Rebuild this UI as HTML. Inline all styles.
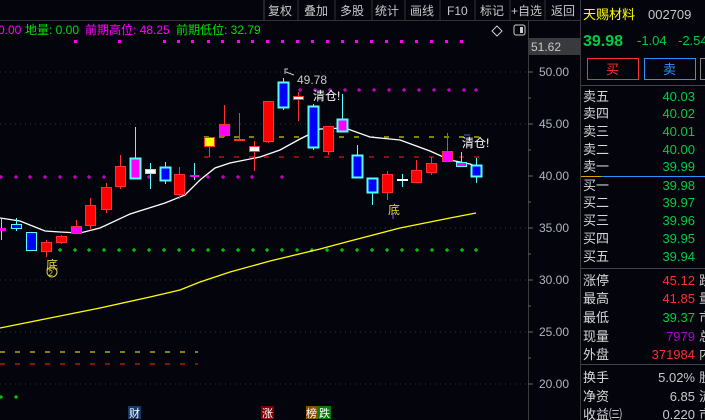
<!DOCTYPE html>
<html><head><meta charset="utf-8"><style>
html,body{margin:0;padding:0;background:#04040c;width:705px;height:420px;overflow:hidden}
svg{display:block}
text{font-family:"Liberation Sans","Noto Sans CJK SC",sans-serif}
</style></head><body>
<svg width="705" height="420" viewBox="0 0 705 420" xmlns="http://www.w3.org/2000/svg">
<rect width="705" height="420" fill="#04040c"/>
<!-- top toolbar -->
<g font-size="12" fill="#c8c8c8">
<line x1="264" y1="0" x2="264" y2="20" stroke="#444"/>
<text x="268" y="15">复权</text><line x1="298" y1="0" x2="298" y2="20" stroke="#333"/>
<text x="304" y="15">叠加</text><line x1="335" y1="0" x2="335" y2="20" stroke="#333"/>
<text x="340" y="15">多股</text><line x1="372" y1="0" x2="372" y2="20" stroke="#333"/>
<text x="375" y="15">统计</text><line x1="405" y1="0" x2="405" y2="20" stroke="#333"/>
<text x="410" y="15">画线</text><line x1="440" y1="0" x2="440" y2="20" stroke="#333"/>
<text x="447" y="15">F10</text><line x1="475" y1="0" x2="475" y2="20" stroke="#333"/>
<text x="480" y="15">标记</text><line x1="510" y1="0" x2="510" y2="20" stroke="#333"/>
<text x="511" y="15">+自选</text><line x1="545" y1="0" x2="545" y2="20" stroke="#333"/>
<text x="551" y="15">返回</text>
</g>
<line x1="0" y1="20.5" x2="580" y2="20.5" stroke="#333"/>
<!-- legend -->
<g font-size="12">
<text x="-2" y="34" fill="#ff00ff">0.00</text>
<text x="25" y="34" fill="#00e000">地量: 0.00</text>
<text x="85" y="34" fill="#ff00ff">前期高位: 48.25</text>
<text x="176" y="34" fill="#00e000">前期低位: 32.79</text>
</g>
<!-- small icons top right of chart -->
<path d="M497 26 l5 5 -5 5 -5 -5z" fill="none" stroke="#ccc"/>
<rect x="514" y="25" width="11" height="10" rx="2" fill="none" stroke="#ccc"/>
<rect x="520" y="27" width="3" height="6" fill="#ccc"/>
<!-- grid -->
<g stroke="#333" stroke-dasharray="1 4">
<line x1="0" y1="72" x2="528" y2="72"/><line x1="0" y1="124" x2="528" y2="124"/>
<line x1="0" y1="228" x2="528" y2="228"/><line x1="0" y1="280" x2="528" y2="280"/>
<line x1="0" y1="332" x2="528" y2="332"/><line x1="0" y1="384" x2="528" y2="384"/>
</g>
<!-- magenta dot row top -->
<g fill="#ff00ff">
<rect x="74" y="40" width="3" height="3"/><rect x="118" y="40" width="3" height="3"/>
<rect x="163" y="40" width="3" height="3"/><rect x="177" y="40" width="3" height="3"/>
<rect x="191" y="40" width="3" height="3"/><rect x="207" y="40" width="3" height="3"/>
<rect x="221" y="40" width="3" height="3"/><rect x="237" y="40" width="3" height="3"/>
<rect x="251" y="40" width="3" height="3"/><rect x="266" y="40" width="3" height="3"/>
<rect x="281" y="40" width="3" height="3"/><rect x="296" y="40" width="3" height="3"/>
<rect x="311" y="40" width="3" height="3"/><rect x="326" y="40" width="3" height="3"/>
<rect x="341" y="40" width="3" height="3"/><rect x="355" y="40" width="3" height="3"/>
<rect x="370" y="40" width="3" height="3"/><rect x="385" y="40" width="3" height="3"/>
<rect x="400" y="40" width="3" height="3"/><rect x="415" y="40" width="3" height="3"/>
<rect x="430" y="40" width="3" height="3"/><rect x="445" y="40" width="3" height="3"/>
<rect x="460" y="40" width="3" height="3"/>
</g>
<!-- plus rows -->
<g stroke="#ff00ff" stroke-width="1">
<path d="M298 90h4M300 88v4M313 90h4M315 88v4M328 90h4M330 88v4M343 90h4M345 88v4M357 90h4M359 88v4M372 90h4M374 88v4M387 90h4M389 88v4M402 90h4M404 88v4M417 90h4M419 88v4M432 90h4M434 88v4M447 90h4M449 88v4M462 90h4M464 88v4M474 90h4M476 88v4"/>
<path d="M-1 177h4M1 175v4M14 177h4M16 175v4M28 177h4M30 175v4M43 177h4M45 175v4M58 177h4M60 175v4M73 177h4M75 175v4M87 177h4M89 175v4M102 177h4M104 175v4M147 177h4M149 175v4M206 177h4M208 175v4M221 177h4M223 175v4M236 177h4M238 175v4M250 177h4M252 175v4M280 177h4M282 175v4"/>
</g>
<g stroke="#00ff00">
<path d="M58 250h4M60 248v4M73 250h4M75 248v4M87 250h4M89 248v4M102 250h4M104 248v4M117 250h4M119 248v4M132 250h4M134 248v4M147 250h4M149 248v4M162 250h4M164 248v4M177 250h4M179 248v4M191 250h4M193 248v4M206 250h4M208 248v4M221 250h4M223 248v4M236 250h4M238 248v4M251 250h4M253 248v4M265 250h4M267 248v4M280 250h4M282 248v4M295 250h4M297 248v4M310 250h4M312 248v4M325 250h4M327 248v4M340 250h4M342 248v4M355 250h4M357 248v4M370 250h4M372 248v4M385 250h4M387 248v4M400 250h4M402 248v4M415 250h4M417 248v4M430 250h4M432 248v4M445 250h4M447 248v4M460 250h4M462 248v4M474 250h4M476 248v4"/>
<path d="M-1 397h4M1 395v4M14 397h4M16 395v4"/>
</g>
<!-- dashed levels -->
<line x1="204" y1="137" x2="480" y2="137" stroke="#ffff00" stroke-dasharray="5 10"/>
<line x1="204" y1="157" x2="480" y2="157" stroke="#ff2020" stroke-dasharray="5 10"/>
<line x1="0" y1="352" x2="198" y2="352" stroke="#ffff00" stroke-dasharray="5 10"/>
<line x1="0" y1="364" x2="198" y2="364" stroke="#ff2020" stroke-dasharray="5 10"/>
<!-- MAs -->
<polyline fill="none" stroke="#ffff00" stroke-width="1.3" points="0,328 30,322 60,316 100,308 150,297 180,290 200,282 230,272 270,261 320,249 350,241 400,228 450,218 476,213"/>
<polyline fill="none" stroke="#ffffff" stroke-width="1.3" points="0,218 20,221 45,231 60,232 80,233 100,228 130,214 165,203 185,195 200,180 215,168 230,163 260,157 280,150 300,139 320,129 345,128 370,137 400,140 430,151 450,160 470,164 478,167"/>
<!-- candles -->
<g stroke-width="1">
<!-- wicks -->
<g stroke="#55ffff">
<line x1="1.5" y1="218" x2="1.5" y2="240"/><line x1="16.5" y1="218" x2="16.5" y2="231"/>
<line x1="135.5" y1="127" x2="135.5" y2="158"/><line x1="150.5" y1="163" x2="150.5" y2="189"/>
<line x1="165.5" y1="162" x2="165.5" y2="184"/><line x1="194.5" y1="163" x2="194.5" y2="180"/>
<line x1="283.5" y1="78" x2="283.5" y2="110"/><line x1="313.5" y1="104" x2="313.5" y2="150"/>
<line x1="342.5" y1="94" x2="342.5" y2="131"/><line x1="357.5" y1="145" x2="357.5" y2="177"/>
<line x1="372.5" y1="178" x2="372.5" y2="205"/><line x1="402.5" y1="174" x2="402.5" y2="187"/>
<line x1="461.5" y1="152" x2="461.5" y2="166"/><line x1="476.5" y1="158" x2="476.5" y2="183"/>
</g>
<g stroke="#ff3030">
<line x1="46.5" y1="240" x2="46.5" y2="257"/><line x1="61.5" y1="235" x2="61.5" y2="244"/>
<line x1="76.5" y1="220" x2="76.5" y2="234"/><line x1="90.5" y1="198" x2="90.5" y2="229"/>
<line x1="106.5" y1="183" x2="106.5" y2="213"/><line x1="120.5" y1="155" x2="120.5" y2="189"/>
<line x1="179.5" y1="167" x2="179.5" y2="199"/><line x1="209.5" y1="137" x2="209.5" y2="157"/>
<line x1="224.5" y1="105" x2="224.5" y2="137"/><line x1="239.5" y1="113" x2="239.5" y2="141"/>
<line x1="254.5" y1="141" x2="254.5" y2="171"/><line x1="268.5" y1="101" x2="268.5" y2="143"/>
<line x1="298.5" y1="92" x2="298.5" y2="121"/><line x1="328.5" y1="126" x2="328.5" y2="155"/>
<line x1="387.5" y1="171" x2="387.5" y2="200"/><line x1="416.5" y1="160" x2="416.5" y2="182"/>
<line x1="431.5" y1="157" x2="431.5" y2="175"/><line x1="447.5" y1="133" x2="447.5" y2="161"/>
</g>
<!-- bodies -->
<rect x="-3" y="228" width="9" height="3" fill="#ff00ff"/>
<rect x="11.5" y="224.5" width="10" height="4" fill="#0000ff" stroke="#55ffff"/>
<rect x="26.5" y="232.5" width="10" height="18" fill="#0000ff" stroke="#55ffff"/>
<rect x="41.5" y="242.5" width="10" height="9" fill="#ff0000" stroke="#ff3030"/>
<rect x="56.5" y="236.5" width="10" height="6" fill="#ff0000" stroke="#ff3030"/>
<rect x="71.5" y="226.5" width="10" height="7" fill="#ff00ff" stroke="#ff3030"/>
<rect x="85.5" y="205.5" width="10" height="20" fill="#ff0000" stroke="#ff3030"/>
<rect x="101.5" y="187.5" width="10" height="22" fill="#ff0000" stroke="#ff3030"/>
<rect x="115.5" y="166.5" width="10" height="20" fill="#ff0000" stroke="#ff3030"/>
<rect x="130.5" y="158.5" width="10" height="20" fill="#ff00ff" stroke="#55ffff" stroke-width="2"/>
<rect x="145.5" y="169.5" width="10" height="4" fill="#ffffff" stroke="#55ffff"/>
<rect x="160.5" y="167.5" width="10" height="13" fill="#0000ff" stroke="#55ffff" stroke-width="2"/>
<rect x="174.5" y="174.5" width="10" height="20" fill="#ff0000" stroke="#ff3030"/>
<rect x="190" y="175" width="9" height="2" fill="#ff00ff"/>
<rect x="204.5" y="137.5" width="10" height="9" fill="#ffff00" stroke="#ff3030"/>
<rect x="219.5" y="124.5" width="10" height="11" fill="#ff00ff" stroke="#ff3030"/>
<rect x="234" y="139" width="11" height="2" fill="#ff3030"/>
<rect x="249.5" y="146.5" width="10" height="5" fill="#ffffff" stroke="#ff3030"/>
<rect x="263.5" y="101.5" width="10" height="40" fill="#ff0000" stroke="#ff3030"/>
<rect x="278.5" y="82.5" width="10" height="25" fill="#0000ff" stroke="#55ffff" stroke-width="2"/>
<rect x="293.5" y="96.5" width="10" height="3" fill="#ffffff" stroke="#ff3030"/>
<rect x="308.5" y="106.5" width="10" height="41" fill="#0000ff" stroke="#55ffff" stroke-width="2"/>
<rect x="323.5" y="126.5" width="10" height="25" fill="#ff0000" stroke="#ff3030"/>
<rect x="337.5" y="119.5" width="10" height="12" fill="#ff00ff" stroke="#55ffff" stroke-width="2"/>
<rect x="352.5" y="155.5" width="10" height="22" fill="#0000ff" stroke="#55ffff" stroke-width="2"/>
<rect x="367.5" y="178.5" width="10" height="14" fill="#0000ff" stroke="#55ffff" stroke-width="2"/>
<rect x="382.5" y="174.5" width="10" height="18" fill="#ff0000" stroke="#ff3030"/>
<rect x="397" y="179" width="11" height="2" fill="#ffffff"/>
<rect x="411.5" y="170.5" width="10" height="12" fill="#ff0000" stroke="#ff3030"/>
<rect x="426.5" y="163.5" width="10" height="9" fill="#ff0000" stroke="#ff3030"/>
<rect x="442.5" y="151.5" width="10" height="10" fill="#ff00ff" stroke="#ff3030"/>
<rect x="456.5" y="162.5" width="10" height="4" fill="#ff00ff" stroke="#55ffff"/>
<rect x="471.5" y="165.5" width="10" height="11" fill="#0000ff" stroke="#55ffff" stroke-width="2"/>
</g>
<!-- annotations -->
<g font-size="12">
<path d="M285 74v-5h3M286 72l8 3" stroke="#ccc" fill="none"/>
<text x="297" y="84" fill="#c8c8c8">49.78</text>
<text x="313" y="100" fill="#ffffff">清仓!</text>
<text x="462" y="147" fill="#ffffff">清仓!</text>
<line x1="464" y1="135" x2="470" y2="135" stroke="#3060ff"/>
<text x="388" y="214" fill="#e0d040">底</text>
<line x1="393" y1="214" x2="393" y2="219" stroke="#a040ff"/>
<text x="46" y="269" fill="#e0d040">底</text>
<circle cx="52" cy="272" r="5" fill="none" stroke="#e0d040"/>
<text x="48.5" y="276" font-size="8" fill="#e0d040">2</text>
</g>
<!-- bottom markers -->
<g font-size="11">
<rect x="128" y="406" width="13" height="13" fill="#14386a"/><text x="129" y="417" fill="#fff">财</text>
<rect x="261" y="406" width="13" height="13" fill="#800000"/><text x="262" y="417" fill="#fff">涨</text>
<rect x="306" y="406" width="12" height="13" fill="#8a4a00"/><text x="306" y="417" fill="#fff">榜</text>
<rect x="318" y="406" width="13" height="13" fill="#0a7a0a"/><text x="319" y="417" fill="#fff">跌</text>
</g>
<!-- axis -->
<line x1="528.5" y1="20" x2="528.5" y2="420" stroke="#3a3a3a"/>
<rect x="529" y="38" width="51" height="17" fill="#3a3a3e"/>
<text x="531" y="51" font-size="12" fill="#c8c8c8">51.62</text>
<g stroke="#666"><path d="M528 72h5M528 124h5M528 176h5M528 228h5M528 280h5M528 332h5M528 384h5M528 98h3M528 150h3M528 202h3M528 254h3M528 306h3M528 358h3"/></g>
<g font-size="12" fill="#b0b4c0">
<text x="539" y="76">50.00</text><text x="539" y="128">45.00</text><text x="539" y="180">40.00</text>
<text x="539" y="232">35.00</text><text x="539" y="284">30.00</text><text x="539" y="336">25.00</text>
<text x="539" y="388">20.00</text>
</g>
<!-- right panel -->
<line x1="580.5" y1="0" x2="580.5" y2="420" stroke="#3a3a3a"/>
<text x="583" y="19" font-size="13" fill="#ffff00">天赐材料</text>
<text x="648" y="19" font-size="13" fill="#c8c8c8">002709</text>
<text x="583" y="46" font-size="16" font-weight="bold" fill="#00cc44">39.98</text>
<text x="637" y="45" font-size="13" fill="#00cc44">-1.04</text>
<text x="678" y="45" font-size="13" fill="#00cc44">-2.54</text>
<rect x="587.5" y="58.5" width="51" height="21" fill="none" stroke="#ff3030"/>
<text x="606" y="74" font-size="13" fill="#ff3030">买</text>
<rect x="644.5" y="58.5" width="51" height="21" fill="none" stroke="#3090ff"/>
<text x="663" y="74" font-size="13" fill="#3090ff">卖</text>
<rect x="700.5" y="58.5" width="10" height="21" fill="none" stroke="#888"/>
<line x1="581" y1="85.5" x2="705" y2="85.5" stroke="#444"/>
<g font-size="13">
<g fill="#d8d8d8">
<text x="583" y="101">卖五</text><text x="583" y="118">卖四</text><text x="583" y="136">卖三</text><text x="583" y="154">卖二</text><text x="583" y="171">卖一</text>
<text x="583" y="190">买一</text><text x="583" y="207">买二</text><text x="583" y="225">买三</text><text x="583" y="243">买四</text><text x="583" y="261">买五</text>
<text x="583" y="285">涨停</text><text x="583" y="303">最高</text><text x="583" y="322">最低</text><text x="583" y="341">现量</text><text x="583" y="359">外盘</text>
<text x="583" y="382">换手</text><text x="583" y="401">净资</text><text x="583" y="419">收益㈢</text>
</g>
<g fill="#00cc44" text-anchor="end">
<text x="695" y="101">40.03</text><text x="695" y="118">40.02</text><text x="695" y="136">40.01</text><text x="695" y="154">40.00</text><text x="695" y="171">39.99</text>
<text x="695" y="190">39.98</text><text x="695" y="207">39.97</text><text x="695" y="225">39.96</text><text x="695" y="243">39.95</text><text x="695" y="261">39.94</text>
<text x="695" y="322">39.37</text>
</g>
<g text-anchor="end">
<text x="695" y="285" fill="#ff3030">45.12</text><text x="695" y="303" fill="#ff3030">41.85</text>
<text x="695" y="341" fill="#b000d0">7979</text><text x="695" y="359" fill="#ff3030">371984</text>
<text x="695" y="382" fill="#c8c8c8">5.02%</text><text x="695" y="401" fill="#c8c8c8">6.85</text><text x="695" y="419" fill="#c8c8c8">0.220</text>
</g>
<g fill="#c8c8c8"><text x="699" y="285">跌</text><text x="699" y="303">量</text><text x="699" y="322">市</text><text x="699" y="341">总</text><text x="699" y="359">内</text><text x="699" y="382">股</text><text x="699" y="401">流</text><text x="699" y="419">市</text></g>
</g>
<line x1="581" y1="176.5" x2="601" y2="176.5" stroke="#e0a000"/>
<line x1="601" y1="176.5" x2="705" y2="176.5" stroke="#3090ff"/>
<line x1="581" y1="268.5" x2="705" y2="268.5" stroke="#444"/>
<line x1="581" y1="364.5" x2="705" y2="364.5" stroke="#444"/>
</svg>
</body></html>
